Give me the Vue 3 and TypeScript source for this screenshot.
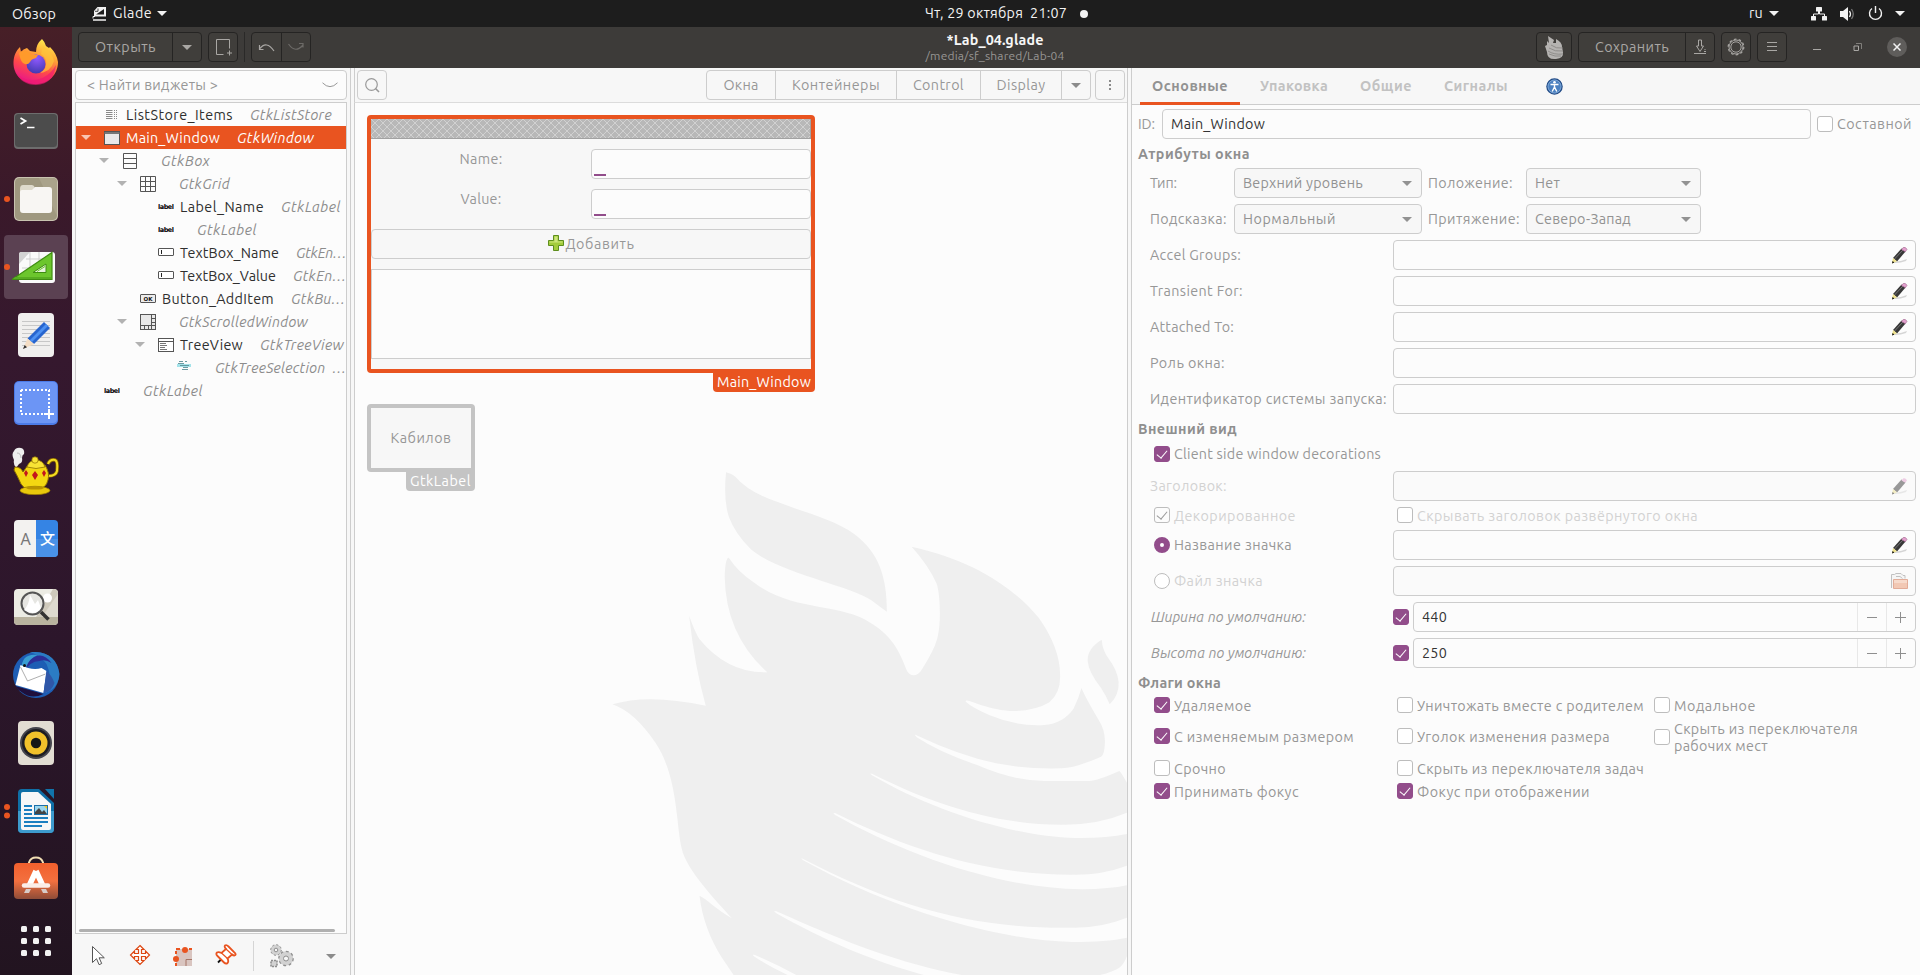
<script setup lang="ts">
import type { Directive } from 'vue'

interface TreeRow {
  depth: number
  icon: string
  name?: string
  nameWidth?: number
  type: string
  typeWidth: number
  open?: boolean
  selected?: boolean
}

interface Flag {
  text: string
  width: number
  on?: boolean
}

// Adjusts tracking so that a label takes its designed width in the fallback font.
const vFit: Directive<HTMLElement, number> = {
  mounted(el, { value }) {
    const count = (el.textContent ?? '').length
    if (!value || !count) return
    const natural = el.getBoundingClientRect().width
    el.style.letterSpacing = `${((value - natural) / count).toFixed(3)}px`
  },
}

const rows: TreeRow[] = [
  { depth: 0, icon: 'list', name: 'ListStore_Items', nameWidth: 107, type: 'GtkListStore', typeWidth: 82 },
  { depth: 0, icon: 'window', name: 'Main_Window', nameWidth: 94, type: 'GtkWindow', typeWidth: 77, open: true, selected: true },
  { depth: 1, icon: 'box', type: 'GtkBox', typeWidth: 49, open: true },
  { depth: 2, icon: 'grid', type: 'GtkGrid', typeWidth: 51, open: true },
  { depth: 3, icon: 'label', name: 'Label_Name', nameWidth: 84, type: 'GtkLabel', typeWidth: 60 },
  { depth: 3, icon: 'label', type: 'GtkLabel', typeWidth: 60 },
  { depth: 3, icon: 'entry', name: 'TextBox_Name', nameWidth: 99, type: 'GtkEn…', typeWidth: 50 },
  { depth: 3, icon: 'entry', name: 'TextBox_Value', nameWidth: 96, type: 'GtkEn…', typeWidth: 53 },
  { depth: 2, icon: 'ok', name: 'Button_AddItem', nameWidth: 112, type: 'GtkBu…', typeWidth: 54 },
  { depth: 2, icon: 'scroll', type: 'GtkScrolledWindow', typeWidth: 129, open: true },
  { depth: 3, icon: 'tree', name: 'TreeView', nameWidth: 63, type: 'GtkTreeView', typeWidth: 84, open: true },
  { depth: 4, icon: 'selection', type: 'GtkTreeSelection  …', typeWidth: 131 },
  { depth: 0, icon: 'label', type: 'GtkLabel', typeWidth: 60 },
]

const groups = [
  { text: 'Окна', width: 35, cell: 69 },
  { text: 'Контейнеры', width: 88, cell: 121 },
  { text: 'Control', width: 51, cell: 84 },
  { text: 'Display', width: 49, cell: 81 },
]

const tabs = [
  { text: 'Основные', width: 76, active: true },
  { text: 'Упаковка', width: 68 },
  { text: 'Общие', width: 52 },
  { text: 'Сигналы', width: 64 },
]

const combos = [
  [
    { label: 'Тип:', labelWidth: 27, value: 'Верхний уровень', width: 120 },
    { label: 'Положение:', labelWidth: 85, value: 'Нет', width: 25 },
  ],
  [
    { label: 'Подсказка:', labelWidth: 77, value: 'Нормальный', width: 93 },
    { label: 'Притяжение:', labelWidth: 92, value: 'Северо-Запад', width: 96 },
  ],
]

const attributes = [
  { text: 'Accel Groups:', width: 91, pencil: true },
  { text: 'Transient For:', width: 93, pencil: true },
  { text: 'Attached To:', width: 84, pencil: true },
  { text: 'Роль окна:', width: 75, pencil: false },
  { text: 'Идентификатор системы запуска:', width: 237, pencil: false },
]

const sizes = [
  { text: 'Ширина по умолчанию:', value: '440' },
  { text: 'Высота по умолчанию:', value: '250' },
]

const flagRows: { height: number; flags: Flag[] }[] = [
  {
    height: 26,
    flags: [
      { text: 'Удаляемое', width: 78, on: true },
      { text: 'Уничтожать вместе с родителем', width: 227 },
      { text: 'Модальное', width: 82 },
    ],
  },
  {
    height: 36,
    flags: [
      { text: 'С изменяемым размером', width: 180, on: true },
      { text: 'Уголок изменения размера', width: 193 },
    ],
  },
  {
    height: 24,
    flags: [
      { text: 'Срочно', width: 52 },
      { text: 'Скрыть из переключателя задач', width: 227 },
    ],
  },
  {
    height: 18,
    flags: [
      { text: 'Принимать фокус', width: 125, on: true },
      { text: 'Фокус при отображении', width: 173, on: true },
    ],
  },
]
const dots = [0, 12, 24]
</script>

<template>
  <div class="desktop">
    <header class="panel">
      <span class="overview" v-fit="44">Обзор</span>
      <div class="appmenu">
        <svg width="16" height="16" viewBox="0 0 16 16">
          <path d="M5.500 1H14v9.500H2V5z" fill="#f2f2f2" />
          <path d="M4 8.500L12 3v5.500z" fill="#1d1d1d" /><path d="M3 5.300h3V2.500" stroke="#1d1d1d" stroke-width=".8" fill="none" />
          <path d="M1 14h13" stroke="#f2f2f2" stroke-width="1.500" /><path d="M1 12.500V10.500l2 0" stroke="#f2f2f2" fill="none" />
        </svg>
        <span v-fit="39">Glade</span>
        <i class="caret"></i>
      </div>
      <div class="clock"><span v-fit="142">Чт, 29 октября&nbsp; 21:07</span><i class="dot"></i></div>
      <div class="status">
        <span v-fit="14">ru</span><i class="caret"></i>
        <svg class="net" width="16" height="14" viewBox="0 0 16 14" fill="#f2f2f2">
          <rect x="5" y="0" width="6" height="4.500" rx=".6" /><rect x="0" y="9" width="5" height="4.500" rx=".6" />
          <rect x="11" y="9" width="5" height="4.500" rx=".6" />
          <path d="M7.500 4v3H2.500v2M8.500 4v3h5v2" fill="none" stroke="#f2f2f2" />
        </svg>
        <svg class="vol" width="15" height="14" viewBox="0 0 15 14">
          <path d="M0 4h3l5-4v14L3 10H0z" fill="#f2f2f2" />
          <path d="M9.500 4q2 3 0 6" stroke="#f2f2f2" fill="none" stroke-width="1.300" />
          <path d="M11.500 2q3.500 5 0 10" stroke="#777" fill="none" stroke-width="1.300" />
        </svg>
        <svg class="pow" width="15" height="15" viewBox="0 0 15 15" fill="none" stroke="#f2f2f2" stroke-width="1.400">
          <path d="M4 2.500a6 6 0 1 0 7 0M7.500 0v7" />
        </svg>
        <i class="caret last"></i>
      </div>
    </header>

    <div class="body">
      <nav class="dock">
        <div class="slot fox">
          <svg viewBox="0 0 48 48">
            <defs>
              <linearGradient id="ff" x1=".75" y1="0" x2=".35" y2="1">
                <stop offset="0" stop-color="#fff14f" /><stop offset=".35" stop-color="#ffa436" />
                <stop offset=".65" stop-color="#ff4a4a" /><stop offset="1" stop-color="#e8158a" />
              </linearGradient>
              <radialGradient id="fp" cx=".55" cy=".2" r=".9">
                <stop offset="0" stop-color="#9059ff" /><stop offset="1" stop-color="#3a36a8" />
              </radialGradient>
            </defs>
            <path d="M1.500 25C2 18 4 14 8 10l1 5q2-3 6-4l3 3 6 1q0-8 6-13 3 3 4 7l3 2 1-1q7 7 8 15c0 13-10 22-22 22S1 39 1.500 25z" fill="url(#ff)" />
            <path d="M3 34q6 9 17 9 15 0 24-15-2 19-20 20-15 0-21-14z" fill="#ef1872" opacity=".65" />
            <circle cx="24" cy="27" r="9.500" fill="url(#fp)" />
            <path d="M7 16q4-4 10-1l3 3 6 0-2 3q-5 1-6 4-2 3-5 2-4 0-6-11z" fill="#ff9a2b" />
            <path d="M29 17q6 4 5 11-1 6-7 8 12-1 15-12-2-9-11-15z" fill="#ffc43b" opacity=".7" />
          </svg>
        </div>
        <div class="slot">
          <svg viewBox="0 0 48 48">
            <rect x="2" y="6" width="44" height="36" rx="4" fill="#6d6d6d" /><rect x="3" y="7" width="42" height="33" rx="3.500" fill="#4c4c4c" />
            <path d="M8.500 11l5 3-5 3" fill="none" stroke="#fff" stroke-width="1.800" /><path d="M15 20.500h7.500" stroke="#fff" stroke-width="1.500" />
          </svg>
        </div>
        <div class="slot"><i class="run"></i>
          <svg viewBox="0 0 48 48">
            <rect x="2" y="2" width="44" height="44" rx="5" fill="#c9c3b0" /><rect x="3" y="3" width="42" height="42" rx="4.500" fill="#9f987f" />
            <path d="M27 3h14q4 0 4 4v34z" fill="#aaa38b" />
            <path d="M8 14q0-4 3-4h9q2 0 3 3v6H8z" fill="#dedacb" />
            <path d="M8 17q0-2 2-2h10l3-3h14q3 0 3 3v20q0 3-3 3H11q-3 0-3-3z" fill="#f8f6f3" />
          </svg>
        </div>
        <div class="slot active"><i class="run"></i>
          <svg viewBox="0 0 48 48">
            <rect x="7" y="9" width="36" height="31" rx="3" fill="#fafafa" /><path d="M7 21L18 9H9q-2 0-2 2z" fill="#d3d3d3" />
            <path d="M10 25h28M14 16h26M13 30h10M18 9v28M27 9v28" stroke="#cfcfcf" stroke-width="1" />
            <path d="M0 36.500L40 9.500v27z" fill="#6cc62d" stroke="#3f8d12" stroke-width="1.200" />
            <path d="M3 34h36v2H1z" fill="#58ad22" /><path d="M21 29.500l13-8.500v8.500z" fill="#e8f4df" stroke="#3f8d12" /><path d="M25 28.500l8-5" stroke="#6cc62d" stroke-width="1" />
          </svg>
        </div>
        <div class="slot">
          <svg viewBox="0 0 48 48">
            <rect x="6" y="2" width="36" height="44" rx="4" fill="#f0efee" />
            <path d="M10 10.500h28M10 14.500h28M10 18.500h28M10 22.500h28M10 26.500h28M10 30.500h28M10 34.500h28" stroke="#c7c7c7" />
            <path d="M15.500 27.500L32 11l6 6-16 16z" fill="#2765cf" /><path d="M17.500 29.500L34 13l2 2-16 16z" fill="#4d91f2" />
            <path d="M11 38l4.500-10.500L22 33z" fill="#f4ddc4" /><path d="M11 38l1.600-4 2.400 2.200z" fill="#333" />
          </svg>
        </div>
        <div class="slot">
          <svg viewBox="0 0 48 48">
            <rect x="2" y="2" width="44" height="44" rx="5" fill="#4c7be8" /><rect x="3" y="3" width="42" height="41" rx="4" fill="#6c95f5" />
            <path d="M9 11h29M9 35h26M9 11v24M37 11v20" stroke="#fff" stroke-width="2" stroke-dasharray="2 2" fill="none" />
            <path d="M37 30v10M32 35h10" stroke="#fff" stroke-width="2" />
          </svg>
        </div>
        <div class="slot">
          <svg viewBox="0 0 48 48">
            <path d="M4 21q-3-4-2-8-3-6 0-9 2-4 7-3 4 1 3 6-2 1-2 4 1 5-3 6z" fill="#eee" /><path d="M5 6q4 0 4 5" stroke="#bbb" fill="none" />
            <path d="M36 17q2-5 7-4 3 1 2 11-1 5-9 5" fill="none" stroke="#8a6a00" stroke-width="3.600" />
            <path d="M36 17q2-5 7-4 3 1 2 11-1 5-9 5" fill="none" stroke="#f4dd22" stroke-width="2" />
            <path d="M3 20q6 0 8 5l5-7h17q5 8 3 15-2 8-9 9-13 3-18-5-4-9-7-14z" fill="#f3d712" stroke="#8f7000" />
            <path d="M15 20q2-7 9-7t9 7q-9 3-18 0z" fill="#f8e335" stroke="#8f7000" stroke-width=".8" /><circle cx="23" cy="13" r="3.200" fill="#f8e335" stroke="#8f7000" stroke-width=".7" />
            <path d="M14 23l2 3-2 4-2-4zM23 24l3 4-3 5-3-5zM32 23l2 3-2 4-2-4z" fill="#c4161c" />
            <ellipse cx="23" cy="43.500" rx="15" ry="4.200" fill="#e8c80c" stroke="#8f7000" stroke-width=".7" /><ellipse cx="23" cy="41" rx="9" ry="1.600" fill="#b99300" />
          </svg>
        </div>
        <div class="slot">
          <svg viewBox="0 0 48 48">
            <path d="M6 5h18v37H6q-4 0-4-4V9q0-4 4-4z" fill="#f3f2f0" /><path d="M24 5h18q4 0 4 4v29q0 4-4 4H24z" fill="#3584e4" />
            <path d="M24 24h22v14q0 4-4 4H24z" fill="#4a92e8" />
            <text x="13.500" y="29.500" text-anchor="middle" font-family="Noto Sans, sans-serif" font-size="16" fill="#777">A</text>
            <text x="35.500" y="29" text-anchor="middle" font-family="Noto Sans CJK SC, sans-serif" font-weight="500" font-size="15" fill="#fff">文</text>
          </svg>
        </div>
        <div class="slot">
          <svg viewBox="0 0 48 48">
            <rect x="2" y="6" width="44" height="36" rx="4" fill="#ecece4" /><path d="M24 34L41 6q5 0 5 4v24z" fill="#cfcabc" /><path d="M30 34l16-23v23z" fill="#dedacf" />
            <path d="M2 34h44v4q0 4-4 4H6q-4 0-4-4z" fill="#b9b39f" /><circle cx="35.500" cy="15" r="4.500" fill="#fff" />
            <circle cx="20.500" cy="20.500" r="11" fill="#e6e6e2" stroke="#555" stroke-width="2" /><path d="M12 27q5-5 6-15l5 9 3-4 3 8q-6 9-17 2z" fill="#fff" />
            <path d="M29 29l7.500 7.500" stroke="#333" stroke-width="3.600" />
          </svg>
        </div>
        <div class="slot">
          <svg viewBox="0.500 0 48 48">
            <circle cx="24.500" cy="24" r="23" fill="#1d5db4" /><path d="M18 1q9 2 17 12 7 14-1 29 13-5 14-19Q45 2 24 1z" fill="#2b7cc4" />
            <path d="M17 10Q30-2 40 12q-6-4-12-2-10 0-16 12z" fill="#2c2f98" /><path d="M10 18q0-16 16-14-8 3-12 13z" fill="#3a9ed2" />
            <path d="M4 34L9 14q12 6 21 3l5 3-3 22z" fill="#fff" /><path d="M9 16l7 14 18-7" fill="none" stroke="#999" stroke-width=".8" />
            <path d="M4 35l28 8q-12 6-22-2-5-3-6-6z" fill="#1f103c" /><path d="M32 42l3-22q5 4 8 12-3 9-11 10z" fill="#2f57a8" /><circle cx="13" cy="14.500" r="1.500" fill="#111" />
          </svg>
        </div>
        <div class="slot">
          <svg viewBox="0 0 48 48">
            <rect x="6" y="2" width="36" height="44" rx="4" fill="#e2ddd3" /><circle cx="24" cy="24" r="16" fill="#45454d" /><circle cx="24" cy="24" r="14" fill="#1d1d22" />
            <circle cx="24" cy="24" r="11.500" fill="#f1c12b" /><circle cx="24" cy="24" r="5.200" fill="#161616" />
          </svg>
        </div>
        <div class="slot"><i class="run two"></i>
          <svg viewBox="0 0 48 48">
            <path d="M10 2h17l15 14v26q0 4-4 4H10q-4 0-4-4V6q0-4 4-4z" fill="#0f6fa6" /><path d="M6 24h36v18q0 4-4 4H10q-4 0-4-4z" fill="#3d9bcd" />
            <path d="M33 2h9v10z" fill="#1174ab" /><path d="M11 5h15l13 12v24q0 2-2 2H11q-2 0-2-2V7q0-2 2-2z" fill="#f7f7f7" />
            <path d="M12 19h8M12 23h8M12 27h8M12 31h24M12 35h24M12 39h18" stroke="#1b7fc0" stroke-width="2" />
            <rect x="22" y="18" width="14" height="10" fill="#1b6fa8" /><rect x="23" y="19" width="12" height="8" fill="#9ad6ee" />
            <path d="M23 27v-2l4-4 3 4 2-2 3 4z" fill="#444" /><path d="M32 19h3v3z" fill="#f6c51d" />
          </svg>
        </div>
        <div class="slot">
          <svg viewBox="0 1 48 48">
            <defs><linearGradient id="sw" x1="0" y1="0" x2="0" y2="1"><stop offset="0" stop-color="#f2602d" /><stop offset=".5" stop-color="#f3703f" /><stop offset="1" stop-color="#8e4c38" /></linearGradient></defs>
            <path d="M17 11V8.500q1.500-5 7-5t7 5V11" fill="none" stroke="#f2dfb4" stroke-width="2" />
            <rect x="2" y="9" width="44" height="36" rx="4" fill="url(#sw)" />
            <path d="M24 17l-6.500 14M24 17l6.500 14" stroke="#fff" stroke-width="5.500" fill="none" />
            <path d="M12 31.500h24" stroke="#fbeee8" stroke-width="4.500" stroke-linecap="round" />
            <path d="M14 35h5l-2 4h-5zM29 35h5l2 4h-5z" fill="#d8ccc8" />
          </svg>
        </div>
        <div class="slot apps">
          <svg viewBox="0 0 30 30" class="appgrid">
            <template v-for="y in dots" :key="y"><rect v-for="x in dots" :key="x" :x="x" :y="y" width="6" height="6" rx="1.500" fill="#f2f2f2" /></template>
          </svg>
        </div>
      </nav>

      <main class="window">
        <div class="titlebar">
          <div class="side">
            <div class="hgroup open"><span class="hbtn"><span v-fit="61">Открыть</span></span><span class="hbtn arrow"><i class="caret"></i></span></div>
            <div class="hgroup sq">
              <svg width="18" height="18" viewBox="0 0 18 18" fill="none" stroke="#a9a7a4"><path d="M9.500 16.500h-7v-15h13v9M15.500 12.500v5M13 15h5" /></svg>
            </div>
            <i class="hsep"></i>
            <div class="hgroup undo">
              <span class="hbtn"><svg width="18" height="12" viewBox="0 0 18 12" fill="none" stroke="#a9a7a4" stroke-width="1.200"><path d="M1.500 8q7-9 14.500 2M1.500 4v4.500H5.500" /></svg></span>
              <span class="hbtn"><svg width="18" height="12" viewBox="0 0 18 12" fill="none" stroke="#6c6a67" stroke-width="1.200"><path d="M1.500 3q7 10 14.500 1M12 2.500h4V6.500" /></svg></span>
            </div>
          </div>
          <div class="titles"><b v-fit="97">*Lab_04.glade</b><small v-fit="139">/media/sf_shared/Lab-04</small></div>
          <div class="side right">
            <div class="hgroup flame">
              <svg width="20" height="25" viewBox="0 0 20 25">
                <path d="M4 1l6 4-1 3 3 0 0-4q6 3 6 8l1 5q1 6-7 7Q3 25 3 17L1 11l2-1 0-4 2 2z" fill="#b5b3b1" />
                <path d="M7 10q5 4 12 3M5 13q6 4 14 3M4 16q6 4 15 3M5 19q6 3 12 2" stroke="#858380" fill="none" stroke-width=".8" />
              </svg>
            </div>
            <div class="hgroup save"><span class="hbtn"><span v-fit="74">Сохранить</span></span>
              <span class="hbtn"><svg width="14" height="16" viewBox="0 0 14 16" fill="none" stroke="#a9a7a4"><path d="M5.500 1h3v6h2L7 12.500 3.500 7h2zM1 14.500h12M11 12.500h2M11.500 10.500h1" /></svg></span>
            </div>
            <div class="hgroup sq">
              <svg width="18" height="18" viewBox="0 0 18 18" fill="none" stroke="#a9a7a4"><circle cx="9" cy="9" r="5.200" /><circle cx="9" cy="9" r="7" stroke-width="1" /><circle cx="9" cy="9" r="7.800" stroke-width="1.200" stroke-dasharray="2.600 2.300" /></svg>
            </div>
            <div class="hgroup sq"><svg width="10" height="10" viewBox="0 0 10 10" stroke="#a9a7a4"><path d="M0 .5h10M0 4.500h10M0 8.500h10" /></svg></div>
            <div class="wm"><svg width="8" height="10" viewBox="0 0 8 10"><path d="M0 7.500h8" stroke="#a9a7a4" /></svg></div>
            <div class="wm"><svg width="9" height="9" viewBox="0 0 9 9" fill="none" stroke="#a9a7a4"><path d="M1 3h4.500v4.500H1z" /><path d="M3 .5h5.500V6" stroke="#807e7b" /></svg></div>
            <div class="wm close"><svg width="8" height="8" viewBox="0 0 8 8"><path d="M.5.5l7 7M7.500.5l-7 7" stroke="#f2f2f2" stroke-width="1.500" /></svg></div>
          </div>
        </div>

        <div class="columns">
          <aside class="left">
            <div class="find"><span v-fit="131">&lt; Найти виджеты &gt;</span>
              <svg width="16" height="6" viewBox="0 0 16 6"><path d="M.5.8Q8 8.500 15.500.8" fill="none" stroke="#999" /></svg>
            </div>
            <div class="tree">
              <div v-for="(r, i) in rows" :key="i" class="row" :class="{ selected: r.selected }" :style="{ paddingLeft: `${2 + r.depth * 18}px` }">
                <span class="exp"><i v-if="r.open" class="caret"></i></span>
                <svg class="ico" width="16" height="16" viewBox="0 0 16 16" fill="none" stroke="#555">
                  <g v-if="r.icon === 'list'" stroke="#8a8a8a"><path d="M2 3.500h6.500M2 5.500h6.500M2 7.500h6.500M2 9.500h6.500M2 11.500h6.500M10 3.500h1M12 3.500h1M10 5.500h1M12 5.500h1M10 7.500h1M12 7.500h1M10 9.500h1M12 9.500h1M10 11.500h1M12 11.500h1" /></g>
                  <g v-else-if="r.icon === 'window'"><rect x=".5" y="1.500" width="15" height="13" fill="#e9e9e9" /><path d="M.5 3h15" stroke-width="2" stroke="#777" /></g>
                  <path v-else-if="r.icon === 'box'" d="M1.500.5h13v15h-13zM1.500 5.500h13M1.500 10.500h13" />
                  <path v-else-if="r.icon === 'grid'" d="M.5.5h15v15H.5zM.5 5.500h15M.5 10.500h15M5.500.5v15M10.500.5v15" />
                  <text v-else-if="r.icon === 'label'" x="8" y="9.500" text-anchor="middle" textLength="16" font-size="6.500" font-weight="700" font-family="DejaVu Sans, sans-serif" fill="#000" stroke="none">label</text>
                  <g v-else-if="r.icon === 'entry'"><rect x=".5" y="3.500" width="15" height="7" rx=".5" fill="#fff" /><path d="M3.500 5v4" stroke="#222" /></g>
                  <g v-else-if="r.icon === 'ok'"><rect x=".5" y="3.500" width="15" height="8" rx=".5" fill="#ececec" /><text x="8" y="9.600" text-anchor="middle" font-size="5.500" font-weight="700" font-family="DejaVu Sans, sans-serif" fill="#111" stroke="none">OK</text></g>
                  <g v-else-if="r.icon === 'scroll'"><rect x=".5" y=".5" width="15" height="15" fill="#e8e8e8" /><path d="M11.500.5v15M.5 11.500h15M11.500 4.500h4M11.500 8.500h4M4.500 11.500v4M8.500 11.500v4" /></g>
                  <g v-else-if="r.icon === 'tree'"><rect x=".5" y="1.500" width="15" height="13" fill="#fff" /><path d="M.5 4.500h15" /><path d="M2 6.500h6M2 8.500h7M2 10.500h5M2 12.500h7" stroke="#777" /></g>
                  <g v-else><path d="M1 5.500h14" stroke="#a4e3ea" stroke-width="3" /><path d="M3 1.500h4M9 1.500h2M2 3.500h6M4 5.500h9M7 7.500h5M6 9.500h6" stroke="#5c8f96" stroke-width=".9" /></g>
                </svg>
                <span v-if="r.name" v-fit="r.nameWidth ?? 0" class="name">{{ r.name }}</span>
                <em v-fit="r.typeWidth">{{ r.type }}</em>
              </div>
              <i class="hscroll"></i>
            </div>
            <div class="tools">
              <svg class="t1" width="18" height="22" viewBox="0 0 18 22"><path d="M3.500 1.500v16l4-3.800 2.600 6 2.600-1.200-2.600-5.700h5.200z" fill="#fff" stroke="#555" /></svg>
              <svg class="t2" width="22" height="22" viewBox="0 0 22 22"><path d="M11 1.500l4 4h-2.500v4h4V7l4 4-4 4v-2.500h-4v4H15l-4 4-4-4h2.500v-4h-4V15l-4-4 4-4v2.500h4v-4H7z" fill="#fff" stroke="#dd4814" stroke-width="1.200" /></svg>
              <svg class="t3" width="20" height="20" viewBox="0 0 20 20"><rect x="3" y="2" width="16" height="17" fill="#d9c5c0" /><path d="M19 12.500h-6V19" fill="none" stroke="#a67566" /><path d="M3 2h4M3 4v3M16 2h3M3 16v3" stroke="#e95420" stroke-width="2" /><circle cx="12" cy="3" r="3" fill="#e95420" /><circle cx="3" cy="12" r="3" fill="#e95420" /></svg>
              <svg class="t4" width="22" height="22" viewBox="0 0 22 22"><path d="M3 18.500l5-5" stroke="#111" stroke-width="1.800" /><path d="M10 1.500q1.500-1 3.500 1l6.500 6.500q1.500 2-.5 2.500-1.500 0-2.500-1l-4.500 4q1.500 3 0 4.500-1.500 1.500-3.500-.5l-6.500-6.500q-2-2-.5-3.500 1.500-1 4.500 .5l4.500-4q-2-2-1-3.500z" fill="#fff" stroke="#e95420" stroke-width="1.800" /><path d="M11 5l6 5.500M6.500 9l6 5.500" stroke="#e95420" stroke-width="1.200" /></svg>
              <i class="tsep"></i>
              <svg class="t5" width="26" height="26" viewBox="0 0 26 26" fill="#d2d2d2" stroke="#8f8f8f"><circle cx="7" cy="7" r="4.600" /><circle cx="7" cy="7" r="5.300" stroke-dasharray="2 2.100" /><circle cx="7" cy="7" r="1.800" fill="#f7f7f7" /><circle cx="17" cy="15.500" r="6.200" /><circle cx="17" cy="15.500" r="7.200" stroke-width="1.300" stroke-dasharray="2.800 2.800" /><circle cx="17" cy="15.500" r="2.500" fill="#f7f7f7" /><rect x="2" y="17.500" width="6" height="6" stroke-width="1.600" stroke-dasharray="2 1" /></svg>
              <i class="caret"></i>
            </div>
          </aside>

          <section class="center">
            <div class="cbar">
              <div class="cbtn"><svg width="15" height="15" viewBox="0 0 15 15" fill="none" stroke="#999" stroke-width="1.200"><circle cx="6.500" cy="6.500" r="5.800" /><path d="M10.500 10.500l3.500 3.500" stroke-width="1.600" /></svg></div>
              <div class="cgroup">
                <span v-for="g in groups" :key="g.text" :style="{ width: `${g.cell}px` }"><span v-fit="g.width">{{ g.text }}</span></span>
                <span class="more"><i class="caret"></i></span>
              </div>
              <div class="cbtn"><i class="kebab"></i></div>
            </div>
            <div class="canvas">
              <svg class="phoenix" width="540" height="515" viewBox="0 0 1568 1545" preserveAspectRatio="none" fill="#efefef">
                <path d="M366 37Q385 43 393 50Q430 95 510 124C600 160 680 178 738 222C810 278 833 350 833 455Q815 442 790 422C720 375 520 340 438 268Q392 220 374 170Q358 120 366 37z" />
                <path d="M1457 539Q1415 565 1416 602Q1418 635 1455 684Q1470 708 1480 733Q1508 705 1506 666Q1502 630 1476 595Q1458 568 1457 539z" />
                <path d="M905 260C1080 300 1200 380 1275 475Q1336 565 1336 645Q1338 698 1305 727Q1260 755 1190 753Q1140 750 1075 724Q1060 718 1062 725Q1080 742 1130 765Q1210 800 1290 795Q1345 790 1375 746Q1390 715 1398 684Q1408 710 1448 780Q1468 812 1466 850Q1465 885 1455 890Q1380 924 1340 925Q1240 928 1150 910Q1040 885 922 827Q908 820 920 832Q985 877 1095 915Q1200 962 1290 963L1420 963Q1445 962 1508 933Q1515 940 1530 968V1058Q1450 1093 1350 1094C1150 1096 960 1030 790 941Q780 938 790 946C960 1050 1200 1130 1380 1134Q1470 1135 1530 1122V1217Q1460 1244 1380 1244C1120 1246 900 1170 684 1060Q672 1056 684 1066C880 1180 1150 1285 1400 1288Q1480 1287 1530 1276V1373Q1460 1402 1380 1403C1080 1408 860 1340 590 1197Q580 1191 590 1201C850 1350 1150 1440 1370 1446Q1470 1446 1530 1433V1488Q1522 1512 1508 1523Q1490 1535 1452 1545H1050C870 1510 720 1450 512 1354Q500 1350 512 1360C650 1440 780 1500 940 1545H570Q510 1512 450 1485Q438 1482 450 1491Q490 1518 545 1545H388L355 1495Q300 1405 289 1307L306 1318Q355 1360 382 1374C340 1325 250 1230 237 1165C220 1080 225 950 162 850Q100 755 36 733Q140 700 307 737Q275 620 259 468Q275 515 288 536Q370 640 486 637Q365 525 362 350Q364 292 374 293Q400 335 450 370C560 455 700 430 785 488C855 530 875 590 892 634Q900 646 910 646Q925 646 935 628Q970 570 978 540C992 495 988 400 977 370Q955 318 905 260z" />
              </svg>
              <div class="mock">
                <svg class="hatch" width="440" height="20">
                  <defs><pattern id="hx" width="8" height="8" patternUnits="userSpaceOnUse"><path d="M0 0l8 8M8 0L0 8" stroke="#d4d4d4" stroke-width=".9" /></pattern></defs>
                  <rect width="440" height="20" fill="#b8b8b8" /><rect width="440" height="20" fill="url(#hx)" />
                  <path d="M0 19.500h440M439.500 0v20" stroke="#a2a2a2" />
                </svg>
                <div class="field"><span v-fit="43">Name:</span><i class="input"></i></div>
                <div class="field"><span v-fit="41">Value:</span><i class="input"></i></div>
                <div class="add">
                  <svg width="16" height="16" viewBox="0 0 16 16"><path d="M5.500.5h5v5h5v5h-5v5h-5v-5h-5v-5h5z" fill="#a3cc3b" stroke="#5e8e1e" /><path d="M6.500 1.500h3v5h5v1h-13v-1h5z" fill="#cde57d" /></svg>
                  <span v-fit="69">Добавить</span>
                </div>
                <div class="list"></div>
                <span class="tag"><span v-fit="94">Main_Window</span></span>
              </div>
              <div class="mock small">
                <span v-fit="61">Кабилов</span>
                <span class="tag"><span v-fit="61">GtkLabel</span></span>
              </div>
            </div>
          </section>

          <section class="props">
            <div class="tabs">
              <span v-for="t in tabs" :key="t.text" class="tab" :class="{ active: t.active }"><b v-fit="t.width">{{ t.text }}</b></span>
              <svg class="a11y" width="17" height="17" viewBox="0 0 17 17"><circle cx="8.500" cy="8.500" r="7.600" fill="#4a80c0" stroke="#224b86" stroke-width="1.300" /><circle cx="8.500" cy="8.500" r="6.500" fill="none" stroke="#8eb3dd" stroke-width=".7" /><circle cx="8.500" cy="4.200" r="1.300" fill="#fff" /><path d="M4.500 6.500h8M8.500 6.500v3.500M8.500 9l-2.300 4.500M8.500 9l2.300 4.500" stroke="#fff" stroke-width="1.400" fill="none" /></svg>
            </div>
            <div class="idrow"><span class="lbl"><span v-fit="17">ID:</span></span><div class="entry"><span v-fit="94">Main_Window</span></div><i class="cb"></i><span v-fit="75">Составной</span></div>
            <h4><b v-fit="112">Атрибуты окна</b></h4>
            <div v-for="(pair, i) in combos" :key="i" class="combos">
              <template v-for="c in pair" :key="c.label">
                <span class="clabel"><span v-fit="c.labelWidth">{{ c.label }}</span></span>
                <div class="combo"><span v-fit="c.width">{{ c.value }}</span><i class="caret"></i></div>
              </template>
            </div>
            <div v-for="a in attributes" :key="a.text" class="prop">
              <span class="plabel"><span v-fit="a.width">{{ a.text }}</span></span>
              <div class="entry"><svg v-if="a.pencil" class="pencil" viewBox="0 0 17 17"><path d="M4 15q7-1 12-3l-1 2q-5 2-11 2z" fill="#d5d5d5" /><path d="M2 11l8.500-9.500 4 3L6 14.500z" fill="#383838" /><path d="M3.500 12l8.500-9" stroke="#777" /><path d="M10.500 2.500l2-2.200q2-.5 3.500 2l-1.700 2.500z" fill="#e2a0cd" stroke="#9a6088" stroke-width=".6" /><path d="M2 11l4 3.300L1 16.500z" fill="#efe28c" /><path d="M1 16.500l.5-2.500 2 1.500z" fill="#111" /></svg></div>
            </div>
            <h4><b v-fit="99">Внешний вид</b></h4>
            <div class="csd"><i class="cb on"></i><span v-fit="207">Client side window decorations</span></div>
            <div class="prop off"><span class="plabel"><span v-fit="77">Заголовок:</span></span>
              <div class="entry"><svg class="pencil" viewBox="0 0 17 17"><path d="M4 15q7-1 12-3l-1 2q-5 2-11 2z" fill="#d5d5d5" /><path d="M2 11l8.500-9.500 4 3L6 14.500z" fill="#383838" /><path d="M10.500 2.500l2-2.200q2-.5 3.500 2l-1.700 2.500z" fill="#e2a0cd" /><path d="M2 11l4 3.300L1 16.500z" fill="#efe28c" /><path d="M1 16.500l.5-2.500 2 1.500z" fill="#111" /></svg></div>
            </div>
            <div class="flags deco off"><div class="flag"><i class="cb on"></i><span v-fit="122">Декорированное</span></div><div class="flag"><i class="cb"></i><span v-fit="281">Скрывать заголовок развёрнутого окна</span></div></div>
            <div class="prop radio"><span class="plabel"><i class="rb on"></i><span v-fit="118">Название значка</span></span>
              <div class="entry"><svg class="pencil" viewBox="0 0 17 17"><path d="M4 15q7-1 12-3l-1 2q-5 2-11 2z" fill="#d5d5d5" /><path d="M2 11l8.500-9.500 4 3L6 14.500z" fill="#383838" /><path d="M3.500 12l8.500-9" stroke="#777" /><path d="M10.500 2.500l2-2.200q2-.5 3.500 2l-1.700 2.500z" fill="#e2a0cd" stroke="#9a6088" stroke-width=".6" /><path d="M2 11l4 3.300L1 16.500z" fill="#efe28c" /><path d="M1 16.500l.5-2.500 2 1.500z" fill="#111" /></svg></div>
            </div>
            <div class="prop radio off"><span class="plabel"><i class="rb"></i><span v-fit="89">Файл значка</span></span>
              <div class="entry"><svg class="folder" width="17" height="16" viewBox="0 0 17 16"><path d="M.5 15V1.500h3L5 .5h5l2 2h2v3" fill="#f4f4f4" stroke="#aaa" /><path d="M5 3.500h4l2.500 2" fill="none" stroke="#aaa" /><path d="M2.500 6.500h14v9h-14z" fill="#f0b397" stroke="#d98c70" /><path d="M3 7h13v3H3z" fill="#f7cdb8" /></svg></div>
            </div>
            <div v-for="s in sizes" :key="s.text" class="prop size">
              <span class="plabel"><em v-fit="155">{{ s.text }}</em></span><i class="cb on"></i>
              <div class="entry"><span v-fit="25">{{ s.value }}</span><i class="step minus"></i><i class="step plus"></i></div>
            </div>
            <h4 class="fh"><b v-fit="83">Флаги окна</b></h4>
            <div v-for="(fr, i) in flagRows" :key="i" class="flags" :style="{ height: `${fr.height}px` }">
              <div v-for="f in fr.flags" :key="f.text" class="flag"><i class="cb" :class="{ on: f.on }"></i><span v-fit="f.width">{{ f.text }}</span></div>
              <div v-if="i === 1" class="flag wrap"><i class="cb"></i><span class="lines"><span v-fit="184">Скрыть из переключателя</span><span v-fit="94">рабочих мест</span></span></div>
            </div>
          </section>
        </div>
      </main>
    </div>
  </div>
</template>

<style>
body { margin: 0; overflow: hidden; }
</style>

<style scoped>
.desktop { width: 1920px; height: 975px; overflow: hidden; display: flex; flex-direction: column; font: 14.3px/17px Ubuntu, "Noto Sans", "Noto Sans CJK SC", sans-serif; color: #979797; background: #fcfcfc; }
.desktop * { box-sizing: border-box; }
span, em, b, small { display: inline-block; white-space: pre; flex: none; }
svg { display: block; flex: none; }
i { flex: none; display: block; }
.caret { width: 0; height: 0; border: 5px solid transparent; border-top-color: currentColor; border-bottom: 0; }

.panel { height: 27px; flex: none; background: #1d1d1d; color: #f2f2f2; display: grid; grid-template-columns: 925px 300px 1fr; align-items: center; grid-template-areas: "a c s"; }
.overview { grid-area: a; margin: 1px 0 0 12px; }
.overview, .appmenu { justify-self: start; }
.appmenu { grid-area: a; margin-left: 92px; display: flex; align-items: center; gap: 5px; }
.clock { grid-area: c; display: flex; align-items: center; gap: 13px; }
.dot { width: 8px; height: 8px; border-radius: 50%; background: #f2f2f2; }
.status { grid-area: s; display: flex; align-items: center; justify-content: flex-end; padding-right: 15px; }
.status .caret { margin-left: 6px; }
.net { margin-left: 32px; }
.vol { margin-left: 13px; }
.pow { margin-left: 13px; }
.status .caret.last { margin-left: 12px; }

.body { flex: 1; min-height: 0; display: flex; }
.dock { width: 72px; flex: none; background: linear-gradient(#471f27, #3a192a 18%, #35182e 35%, #2c162b 65%, #221420); display: flex; flex-direction: column; align-items: center; gap: 4px; padding-top: 4px; }
.slot { width: 64px; height: 64px; flex: none; border-radius: 4px; display: flex; align-items: center; justify-content: center; position: relative; }
.slot > svg { width: 48px; height: 48px; }
.slot.fox { padding-bottom: 4px; }
.slot.active { background: #5b4152; }
.slot.apps { height: 52px; }
.slot > svg.appgrid { width: 30px; height: 30px; }
.run { position: absolute; left: 0; top: 29px; width: 6px; height: 6px; border-radius: 50%; background: #e95420; }
.run.two { top: 25px; box-shadow: 0 8.500px #e95420; }

.window { flex: 1; min-width: 0; display: flex; flex-direction: column; }
.titlebar { height: 41px; flex: none; background: #3d3b39; display: flex; justify-content: space-between; color: #a9a7a4; position: relative; }
.side { display: flex; align-items: center; padding-left: 6px; width: 700px; height: 40px; }
.side.right { justify-content: flex-end; padding: 0 12px 0 0; }
.hgroup { height: 30px; border: 1px solid #252423; border-radius: 4px; display: flex; align-items: center; justify-content: center; background: #403e3b; }
.hbtn { height: 28px; display: flex; align-items: center; justify-content: center; }
.hbtn + .hbtn { border-left: 1px solid #252423; }
.open { width: 124px; margin-right: 6px; }
.open .hbtn:first-child { width: 93px; }
.open .arrow { width: 29px; }
.sq { width: 30px; }
.hsep { width: 1px; height: 30px; background: #2a2928; margin: 0 6px; }
.undo { width: 60px; }
.undo .hbtn { width: 29px; }
.titles { position: absolute; left: 0; right: 0; top: 5px; padding-right: 26px; display: flex; flex-direction: column; align-items: center; transform: translateX(12px); }
.titles b { color: #f7f7f7; line-height: 16px; }
.titles small { font-size: 12px; line-height: 15px; color: #979593; }
.flame { width: 36px; margin-right: 6px; }
.save { width: 137px; margin-right: 6px; }
.save .hbtn:first-child { width: 106px; }
.save .hbtn:last-child { width: 29px; }
.side.right .sq { margin-right: 6px; }
.wm { width: 20px; height: 20px; border-radius: 50%; display: flex; align-items: center; justify-content: center; margin-left: 14px; margin-right: 6px; }
.wm + .wm { margin-left: 14px; }
.wm.close { background: #5f5d5b; margin-right: 1px; }

.columns { flex: 1; min-height: 0; display: flex; }
.left { width: 279px; flex: none; background: #f7f7f7; border-right: 1px solid #cdcdcd; padding: 2px 3px 0; display: flex; flex-direction: column; }
.find { height: 30px; width: 272px; flex: none; border: 1px solid #cdcdcd; border-radius: 4px; background: #fcfcfc; display: flex; align-items: center; justify-content: space-between; padding: 0 8px 0 11px; }
.tree { position: relative; margin-top: 2px; width: 272px; height: 832px; flex: none; border: 1px solid #cdcdcd; background: #fcfcfc; overflow: hidden; }
.row { height: 23px; display: flex; align-items: center; color: #2f2f2f; overflow: hidden; }
.row em { margin-left: 17px; color: #8c8c8c; }
.row .name, .row em { padding-top: 1px; }
.row.selected { background: #e95420; color: #fff; }
.row.selected em { color: #fff; }
.exp { width: 16px; height: 5px; display: flex; justify-content: center; color: #b2b2b2; }
.selected .exp { color: #f9c5b2; }
.ico { margin: 0 6px 0 10px; }
.hscroll { position: absolute; left: 3px; bottom: 1px; width: 256px; height: 3px; border-radius: 2px; background: #b0b0b0; }
.tools { flex: 1; display: flex; align-items: center; color: #8b8b8b; }
.t1 { margin: 2px 0 0 14px; }
.t2 { margin: 1px 0 0 22px; }
.t3 { margin: 4px 0 0 22px; }
.t4 { margin: 0 0 0 22px; }
.tsep { width: 1px; height: 30px; margin: 3px 0 0 16px; background: #d5d5d5; }
.t5 { margin: 3px 0 0 15px; }
.tools > .caret { margin: 4px 0 0 31px; }

.center { width: 777px; flex: none; background: #f7f7f7; border-right: 1px solid #cdcdcd; display: flex; flex-direction: column; padding-left: 3px; }
.cbar { height: 35px; flex: none; border-left: 1px solid #cdcdcd; border-bottom: 1px solid #dcdcdc; display: flex; padding: 2px 2px 0; }
.cbtn { width: 30px; height: 30px; border: 1px solid #cdcdcd; border-radius: 4px; display: flex; align-items: center; justify-content: center; }
.cgroup { margin-left: auto; margin-right: 4px; width: 385px; height: 30px; border: 1px solid #cdcdcd; border-radius: 4px; display: flex; }
.cgroup > span { display: flex; align-items: center; justify-content: center; border-right: 1px solid #cdcdcd; }
.cgroup > .more { flex: 1; border: 0; color: #8b8b8b; }
.kebab { width: 2px; height: 2px; background: #8b8b8b; box-shadow: 0 -4px #8b8b8b, 0 4px #8b8b8b; }
.canvas { flex: 1; min-height: 0; position: relative; background: #fcfcfc; border-left: 1px solid #cdcdcd; padding: 12px; overflow: hidden; }
.phoenix { position: absolute; left: 245px; top: 357px; }
.mock { position: relative; width: 448px; height: 258px; border: 4px solid #e95420; border-radius: 4px 4px 0 4px; background: #f7f7f7; display: flex; flex-direction: column; gap: 10px; }
.field { display: grid; grid-template-columns: 220px 220px; height: 30px; justify-items: center; }
.field > span { margin-top: 2px; }
.input { width: 220px; height: 30px; border: 1px solid #cdcdcd; border-radius: 4px; background: #fcfcfc; display: flex; align-items: flex-end; padding: 0 0 2px 2px; }
.input::before { content: ""; width: 12px; height: 2px; background: #924d8b; }
.add { height: 30px; border: 1px solid #cdcdcd; border-radius: 4px; display: flex; align-items: center; justify-content: center; gap: 2px; }
.add svg { margin-bottom: 2px; }
.list { height: 90px; border: 1px solid #cdcdcd; background: #fcfcfc; }
.tag { position: absolute; right: -4px; top: 100%; margin-top: 4px; height: 19px; padding: 0 4px; line-height: 18px; background: #e95420; color: #fff; border-radius: 0 0 4px 4px; }
.mock.small { margin-top: 31px; width: 108px; height: 68px; border-color: #c4c4c4; align-items: center; justify-content: center; }
.small .tag { background: #c4c4c4; }

.props { flex: 1; min-width: 0; background: #fcfcfc; margin-left: 3px; border-left: 1px solid #cdcdcd; box-shadow: -3px 0 #f7f7f7; }
.tabs { height: 37px; background: #f7f7f7; border-bottom: 1px solid #cdcdcd; display: flex; padding-left: 8px; }
.tab { height: 37px; padding: 10px 12px 0; margin-right: 8px; color: #c2c2c2; border-bottom: 3px solid transparent; }
.tab.active { color: #929292; border-color: #e95420; }
.a11y { margin: 10px 0 0 18px; }
.entry { height: 30px; border: 1px solid #cdcdcd; border-radius: 4px; background: #fcfcfc; display: flex; align-items: center; color: #333; position: relative; }
.idrow { display: flex; align-items: center; height: 30px; margin: 4px 0 0 6px; }
.idrow .lbl { width: 24px; }
.idrow .entry { width: 649px; padding-left: 8px; }
.cb { width: 16px; height: 16px; border: 1px solid #bdbdbd; border-radius: 3px; background: #fff; display: flex; justify-content: center; }
.cb.on { background: #924d8b; border-color: #924d8b; }
.cb.on::before { content: ""; width: 5px; height: 9px; margin-top: 1px; border: solid #fff; border-width: 0 1.800px 1.800px 0; transform: rotate(40deg); }
.idrow .cb { margin: 0 4px 0 6px; }
h4 { margin: 0 0 0 6px; height: 29px; display: flex; align-items: center; font: inherit; color: #8f8f8f; }
h4 b { padding-top: 1px; }
.combos { display: flex; align-items: center; height: 30px; margin: 0 0 6px 18px; }
.clabel { width: 84px; }
.combo { height: 30px; width: 188px; border: 1px solid #cdcdcd; border-radius: 4px; background: #f7f7f7; display: flex; align-items: center; justify-content: space-between; padding: 0 9px 0 8px; color: #929292; }
.combo + .clabel { width: 98px; margin-left: 6px; }
.combo:last-child { width: 175px; }
.prop { display: flex; align-items: center; height: 30px; margin: 0 0 6px 18px; }
.plabel { width: 243px; display: flex; align-items: center; }
.prop .entry { width: 523px; }
.pencil { position: absolute; right: 7px; top: 6px; width: 17px; height: 17px; }
.folder { position: absolute; right: 7px; top: 6px; opacity: .7; }
.prop + h4 { height: 18px; }
.csd { display: flex; align-items: center; height: 20px; margin: 6px 0 7px 22px; gap: 4px; }
.off { color: #d2d2d2; }
.off .entry { background: #fafafa; }
.off .pencil { opacity: .5; }
.off .cb.on { background: #fcfcfc; border-color: #bdbdbd; }
.off .cb.on::before { border-color: #999; }
.flags { display: flex; margin-left: 22px; }
.flag { display: flex; gap: 4px; width: 243px; height: 18px; align-items: center; }
.flag .cb { margin-bottom: 2px; }
.flag:nth-child(2) { width: 257px; }
.deco { height: 23px; }
.radio .plabel { padding-left: 4px; }
.rb { width: 16px; height: 16px; border: 1px solid #bdbdbd; border-radius: 50%; margin-right: 4px; background: #fff; }
.rb.on { border: 6px solid #924d8b; }
.size .plabel em { margin-left: 1px; }
.size .cb { margin-right: 4px; }
.prop.size .entry { width: 503px; padding-left: 8px; }
.step { width: 29px; height: 28px; border-left: 1px solid #e8e8e8; background: linear-gradient(#8f8f8f, #8f8f8f) 9px 14px / 10px 1px no-repeat; }
.minus { margin-left: auto; }
.plus { background: linear-gradient(#8f8f8f, #8f8f8f) 8px 14px / 11px 1px no-repeat, linear-gradient(#8f8f8f, #8f8f8f) 13px 9px / 1px 11px no-repeat; }
.prop + h4.fh { height: 17px; margin-bottom: 6px; }
.flags:nth-last-child(3) .flag { margin-top: 5px; }
.flags:nth-last-child(3) .flag.wrap { height: 34px; margin-top: -3px; }
.flags:nth-last-child(2) { padding-top: 1px; }
.lines { display: flex; flex-direction: column; align-items: flex-start; padding-top: 1px; }
.wrap .cb { margin: 0; }
</style>
